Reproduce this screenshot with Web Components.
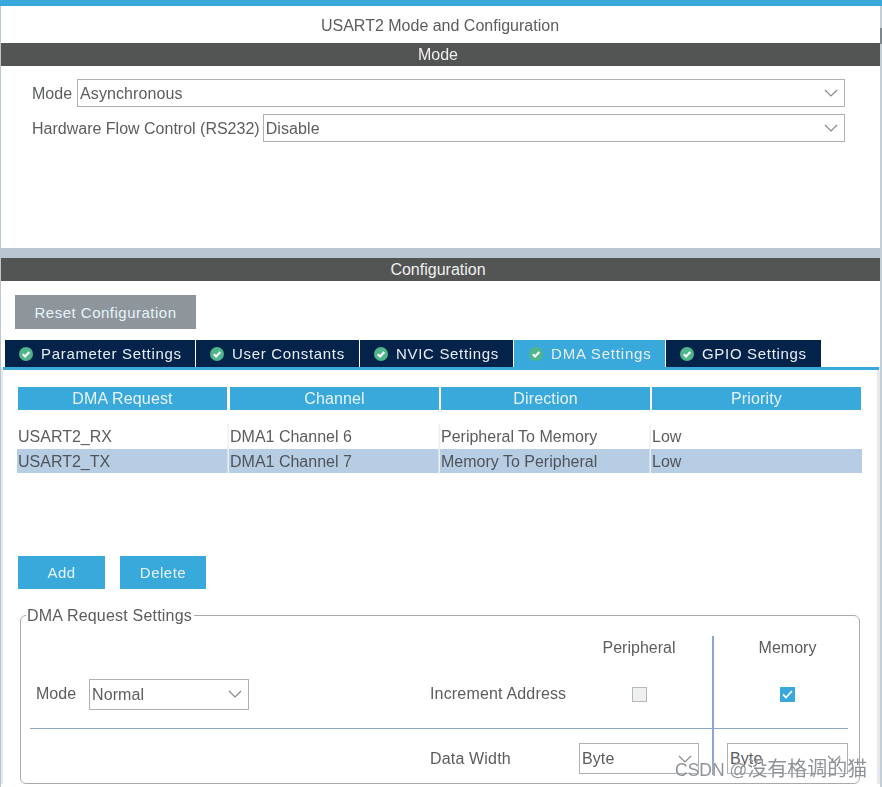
<!DOCTYPE html>
<html><head><meta charset="utf-8">
<style>
html,body{margin:0;padding:0;background:#fff;}
body{width:882px;height:787px;overflow:hidden;font-family:"Liberation Sans",Arial,sans-serif;font-size:16px;color:#5a5c5e;}
</style></head>
<body>
<app-shell>
  <section-bar>Mode</section-bar>
  <mode-form></mode-form>
  <section-bar slot="config">Configuration</section-bar>
  <config-panel slot="config"></config-panel>
</app-shell>
<script>
const chevron=`<svg width="14" height="8" viewBox="0 0 14 8" aria-hidden="true"><path d="M1 1l6 6 6-6" fill="none" stroke="#83898d" stroke-width="1.2"/></svg>`;

function define(name,html){
  customElements.define(name,class extends HTMLElement{
    constructor(){super();this.attachShadow({mode:'open'}).innerHTML=html;}
  });
}

define('app-shell',`<style>
:host{display:flex;flex-direction:column;width:882px;height:787px;position:relative;overflow:hidden;box-sizing:border-box;border-top:6px solid #39a9dc;filter:blur(.3px);}
.frame{flex:1;display:flex;flex-direction:column;margin:0 2px 0 1px;}
.edge{position:absolute;top:0;left:0;width:1px;bottom:0;background:#b8c5cf;}
.title{height:37px;display:flex;align-items:center;justify-content:center;padding:3px 1px 0 0;box-sizing:border-box;}
.sep{height:10px;background:#b9c6cf;}
.rail{position:absolute;top:0;right:0;width:2px;bottom:0;background:#c3ced6;}
.thumb{position:absolute;top:22px;right:0;width:2px;height:16px;background:#7d868c;}
</style>
<div class="edge"></div>
<div class="frame">
<div class="title">USART2 Mode and Configuration</div>
<slot></slot>
<div class="sep"></div>
<slot name="config"></slot>
</div>
<div class="rail"></div><div class="thumb"></div>
<water-mark></water-mark>`);

define('section-bar',`<style>
:host{display:block;height:23px;line-height:23px;background:#535554;color:#f0f0f0;text-align:center;padding-right:5px;}
</style><slot></slot>`);

define('drop-select',`<style>
:host{display:flex;align-items:center;box-sizing:border-box;border:1.5px solid #aeb1b3;background:#fff;padding:1px 6px 0 2px;justify-content:space-between;color:#5a5c5e;letter-spacing:.1px;}
svg{margin-top:-1px;}
</style><slot></slot>${chevron}`);

define('mode-form',`<style>
:host{display:flex;flex-direction:column;gap:7px;height:182px;box-sizing:border-box;padding:13px 35px 0 31px;}
.row{display:flex;height:28px;align-items:center;gap:3px;}
.row.first{gap:5px;}
span{padding-top:1px;}
drop-select{flex:1;height:28px;}
</style>
<div class="row first"><span>Mode</span><drop-select>Asynchronous</drop-select></div>
<div class="row"><span>Hardware Flow Control (RS232)</span><drop-select>Disable</drop-select></div>`);

define('tab-item',`<style>
:host{display:flex;align-items:center;gap:8px;height:27px;box-sizing:border-box;padding-left:14px;background:#03234b;color:#e8eef3;font-size:15px;letter-spacing:.68px;}
:host([active]){background:#39a9dc;padding-left:15px;letter-spacing:.8px;}
svg{flex:none;}
</style><svg width="14" height="14" viewBox="0 0 14 14" aria-hidden="true"><circle cx="7" cy="7" r="7" fill="#4fb58a"/><path d="M3.8 7.2l2.3 2.3 4.2-4.4" fill="none" stroke="#fff" stroke-width="2.2"/></svg><slot></slot>`);

define('action-button',`<style>
:host{display:flex;align-items:center;justify-content:center;background:#39a9dc;color:#e6f3fa;font-size:15px;letter-spacing:.5px;height:33px;box-sizing:border-box;}
:host([muted]){background:#8e969c;}
</style><slot></slot>`);

define('dma-table',`<style>
:host{display:block;margin:17px 0 0 17px;}
.head{display:grid;grid-template-columns:209px 210px 209px 209px;column-gap:2px;height:23px;margin-bottom:14px;}
.head div{background:#39a9dc;color:#e6f3fa;text-align:center;line-height:23px;letter-spacing:.15px;}
.head div:nth-child(2){margin-left:1px;}
.row{display:grid;height:24px;line-height:25px;margin-bottom:1px;margin-left:-1px;width:845px;grid-template-columns:212px 211px 211px 211px;}
.row div{padding-left:1px;box-shadow:inset -1.5px 0 0 #eaf0f6;}
.row div:last-child{box-shadow:none;}
.row.sel{background:#b6cde4;color:#50545a;}
</style>
<div class="head"><div>DMA Request</div><div>Channel</div><div>Direction</div><div>Priority</div></div>
<div class="row"><div>USART2_RX</div><div>DMA1 Channel 6</div><div>Peripheral To Memory</div><div>Low</div></div>
<div class="row sel"><div>USART2_TX</div><div>DMA1 Channel 7</div><div>Memory To Peripheral</div><div>Low</div></div>`);

define('check-box',`<style>
:host{display:block;width:15px;height:15px;box-sizing:border-box;border:1.5px solid #b4b8bb;background:#eef0f2;}
:host([checked]){border:none;background:#39a9dc;}
svg{display:none;}
:host([checked]) svg{display:block;}
</style><svg width="15" height="15" viewBox="0 0 15 15" aria-hidden="true"><path d="M3 7.5l3 3 6-6.5" fill="none" stroke="#fff" stroke-width="1.8"/></svg>`);

define('request-settings',`<style>
:host{display:block;margin:17px 20px 0 19px;}
fieldset{margin:0;padding:0 9px 0 9px;border:1.5px solid #a6aaae;border-radius:6px;height:178px;box-sizing:border-box;min-width:0;}
legend{padding:0 2px 0 1px;margin-left:-4px;letter-spacing:.2px;line-height:20px;height:18px;}
.grid{display:grid;grid-template-columns:400px 149px 120px 28px 121px;grid-template-rows:42px 50px 9px 1px 45px;margin-top:3px;}
.grid>*{align-self:center;}
.mode{display:flex;align-items:center;gap:13px;padding-left:6px;}
.mode drop-select{width:160px;height:31px;}
.c{justify-self:center;}
.lab{letter-spacing:.17px;}
.line{grid-column:1/-1;grid-row:4;height:1px;background:#8ea6cf;align-self:stretch;}
.v{grid-column:4;grid-row:1/-1;width:1.5px;background:#8ea6cf;align-self:stretch;justify-self:center;margin:9px 0 -1px;}
.w{height:31px;align-self:end;}
.e{align-self:end;line-height:31px;}
</style>
<fieldset><legend>DMA Request Settings</legend>
<div class="grid">
<span class="c" style="grid-column:3;grid-row:1">Peripheral</span>
<span class="c" style="grid-column:5;grid-row:1">Memory</span>
<div class="mode" style="grid-column:1;grid-row:2"><span>Mode</span><drop-select>Normal</drop-select></div>
<span class="lab" style="grid-column:2;grid-row:2">Increment Address</span>
<check-box class="c" style="grid-column:3;grid-row:2"></check-box>
<check-box class="c" checked style="grid-column:5;grid-row:2"></check-box>
<div class="line"></div>
<span class="e lab" style="grid-column:2;grid-row:5">Data Width</span>
<drop-select class="w" style="grid-column:3;grid-row:5">Byte</drop-select>
<drop-select class="w" style="grid-column:5;grid-row:5">Byte</drop-select>
<div class="v"></div>
</div></fieldset>`);

define('config-panel',`<style>
:host{display:flex;flex-direction:column;position:relative;}
.reset{width:181px;margin:14px 0 0 14px;height:34px;}
.tabs{display:flex;margin:11px 0 0 4px;gap:1px;}
.rule{height:3px;background:#39a9dc;margin:0 1px 0 2px;position:relative;z-index:1;}
.acts{display:flex;margin:82px 0 0 17px;}
.add{width:87px;margin-right:15px;}
.del{width:86px;}
.bandl{position:absolute;left:0;width:2px;top:86px;bottom:0;background:#e6eaee;}
.bandr{position:absolute;right:0;width:3px;top:86px;bottom:0;background:#e6eaee;}
</style>
<div class="bandl"></div><div class="bandr"></div>
<action-button class="reset" muted>Reset Configuration</action-button>
<div class="tabs">
<tab-item style="width:190px">Parameter Settings</tab-item>
<tab-item style="width:163px">User Constants</tab-item>
<tab-item style="width:153px">NVIC Settings</tab-item>
<tab-item style="width:151px" active>DMA Settings</tab-item>
<tab-item style="width:155px">GPIO Settings</tab-item>
</div>
<div class="rule"></div>
<dma-table></dma-table>
<div class="acts"><action-button class="add">Add</action-button><action-button class="del">Delete</action-button></div>
<request-settings></request-settings>`);

define('water-mark',`<style>
:host{position:absolute;left:675px;top:752px;font:17.5px/22px "Liberation Sans","Noto Sans CJK SC",sans-serif;color:rgba(115,120,125,.8);white-space:nowrap;text-shadow:0 0 1px #fff;}
b{font-weight:400;font-size:20px;}
</style>CSDN @<b>没有格调的猫</b>`);
</script>
</body></html>
